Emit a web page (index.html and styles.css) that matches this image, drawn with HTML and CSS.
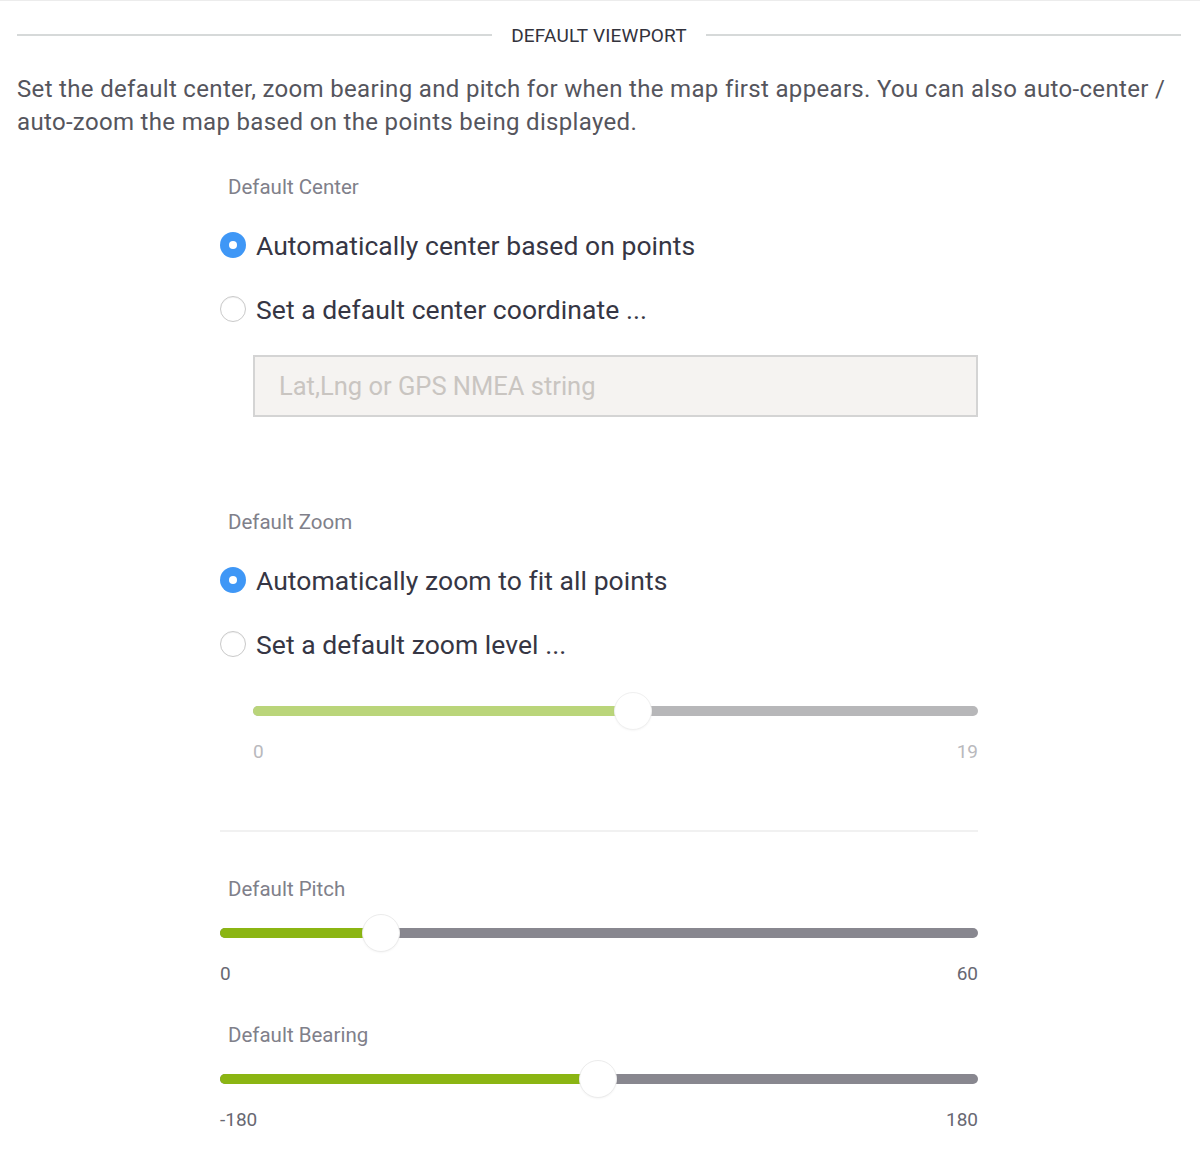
FILE: index.html
```html
<!DOCTYPE html>
<html>
<head>
<meta charset="utf-8">
<link rel="stylesheet" href="styles.css">
</head>
<body>
<div class="page">
  <div class="heading">
    <span class="rule"></span>
    <span class="heading-text">Default Viewport</span>
    <span class="rule"></span>
  </div>
  <p class="desc">Set the default center, zoom bearing and pitch for when the map first appears. You can also auto-center / auto-zoom the map based on the points being displayed.</p>

  <div class="content">
    <div class="group group-center">
      <div class="field-label">Default Center</div>
      <div class="radio-row first"><span class="radio checked"></span><span class="radio-text">Automatically center based on points</span></div>
      <div class="radio-row"><span class="radio"></span><span class="radio-text">Set a default center coordinate ...</span></div>
      <div class="text-input">Lat,Lng or GPS NMEA string</div>
    </div>

    <div class="group group-zoom">
      <div class="field-label">Default Zoom</div>
      <div class="radio-row first"><span class="radio checked"></span><span class="radio-text">Automatically zoom to fit all points</span></div>
      <div class="radio-row"><span class="radio"></span><span class="radio-text">Set a default zoom level ...</span></div>
      <div class="slider-block indented disabled">
        <div class="slider">
          <div class="track"><div class="fill" style="width:380px"></div></div>
          <div class="thumb" style="left:361px"></div>
        </div>
        <div class="range"><span>0</span><span>19</span></div>
      </div>
    </div>

    <div class="divider"></div>

    <div class="group group-pitch">
      <div class="field-label">Default Pitch</div>
      <div class="slider-block">
        <div class="slider">
          <div class="track"><div class="fill" style="width:161px"></div></div>
          <div class="thumb" style="left:142px"></div>
        </div>
        <div class="range"><span>0</span><span>60</span></div>
      </div>
    </div>

    <div class="group group-bearing">
      <div class="field-label">Default Bearing</div>
      <div class="slider-block">
        <div class="slider">
          <div class="track"><div class="fill" style="width:378px"></div></div>
          <div class="thumb" style="left:359px"></div>
        </div>
        <div class="range"><span>-180</span><span>180</span></div>
      </div>
    </div>
  </div>
</div>
</body>
</html>
```

FILE: styles.css
```css
html, body {
  margin: 0;
  padding: 0;
  background: #ffffff;
}

body {
  font-family: Roboto, "Open Sans", sans-serif;
  border-top: 1px solid #ececec;
}

.page {
  padding: 0 19px 0 17px;
}

.heading {
  display: flex;
  align-items: center;
  gap: 19px;
  height: 26px;
  margin-top: 21px;
}

.rule {
  flex: 1;
  height: 2px;
  background: #d6d9d9;
}

.heading-text {
  font-size: 19px;
  text-transform: uppercase;
  color: #33333d;
  letter-spacing: 0.2px;
}

.desc {
  margin: 25px 0 0 0;
  font-size: 24px;
  line-height: 33px;
  letter-spacing: 0.33px;
  color: #55555d;
}

.content {
  margin-left: 203px;
  width: 758px;
}

.field-label {
  padding-left: 8px;
  font-size: 20.5px;
  line-height: 24px;
  color: #80808a;
}

.group-center {
  margin-top: 36px;
}

.radio-row {
  display: flex;
  align-items: center;
  gap: 10px;
  height: 36px;
  margin-top: 28px;
}

.radio-row.first {
  margin-top: 28px;
}

.radio {
  width: 26px;
  height: 26px;
  box-sizing: border-box;
  border-radius: 50%;
  border: 1.5px solid #c9c9c9;
  background: #ffffff;
  box-shadow: inset 0 1px 1px rgba(0,0,0,0.05);
  display: flex;
  align-items: center;
  justify-content: center;
  flex: none;
}

.radio.checked {
  border: none;
  background: #3f97f6;
  box-shadow: none;
}

.radio.checked::after {
  content: "";
  width: 8px;
  height: 8px;
  border-radius: 50%;
  background: #ffffff;
}

.radio-text {
  font-size: 26.5px;
  letter-spacing: 0.05px;
  color: #363644;
}

.text-input {
  margin: 28px 0 0 33px;
  width: 725px;
  height: 62px;
  box-sizing: border-box;
  border: 2px solid #d4d4d4;
  background: #f5f3f1;
  padding-left: 24px;
  display: flex;
  align-items: center;
  font-size: 25.5px;
  color: #c9c5c1;
}

.group-zoom {
  margin-top: 93px;
}

.slider-block.indented {
  margin-left: 33px;
}

.group-zoom .slider-block {
  margin-top: 30px;
}

.slider {
  position: relative;
  height: 38px;
  display: flex;
  align-items: center;
}

.track {
  flex: 1;
  height: 10px;
  border-radius: 5px;
  background: #88878f;
  overflow: hidden;
}

.fill {
  height: 100%;
  background: #8bb513;
}

.thumb {
  position: absolute;
  top: 0;
  width: 38px;
  height: 38px;
  box-sizing: border-box;
  border-radius: 50%;
  background: #ffffff;
  border: 1px solid #ececec;
  box-shadow: 0 1px 2px rgba(0,0,0,0.04);
}

.range {
  display: flex;
  justify-content: space-between;
  margin-top: 10px;
  font-size: 19px;
  line-height: 24px;
  color: #686872;
}

.disabled .track {
  background: #b7b7b9;
}

.disabled .fill {
  background: #bad57a;
}

.disabled .range {
  color: #b9b9bd;
}

.disabled .thumb {
  border-color: #f0f0f0;
}

.divider {
  margin-top: 66px;
  height: 2px;
  background: #f1f1f1;
}

.group-pitch {
  margin-top: 45px;
}

.group-pitch .slider-block,
.group-bearing .slider-block {
  margin-top: 13px;
}

.group-bearing {
  margin-top: 37px;
}
```
